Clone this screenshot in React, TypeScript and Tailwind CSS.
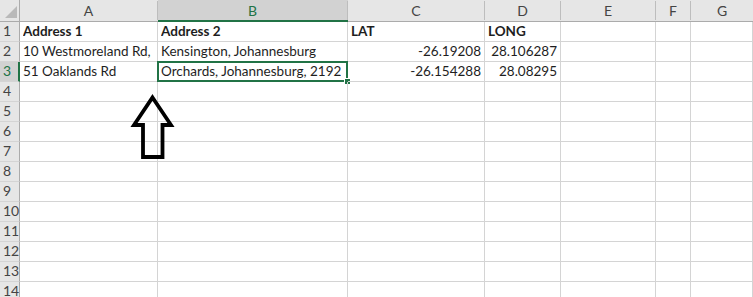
const COLS = ["A", "B", "C", "D", "E", "F", "G"];

type Cell = { v: string; bold?: boolean; num?: boolean };

const DATA: Record<number, Cell[]> = {
  1: [
    { v: "Address 1", bold: true },
    { v: "Address 2", bold: true },
    { v: "LAT", bold: true },
    { v: "LONG", bold: true },
  ],
  2: [
    { v: "10 Westmoreland Rd," },
    { v: "Kensington, Johannesburg" },
    { v: "-26.19208", num: true },
    { v: "28.106287", num: true },
  ],
  3: [
    { v: "51 Oaklands Rd" },
    { v: "Orchards, Johannesburg, 2192" },
    { v: "-26.154288", num: true },
    { v: "28.08295", num: true },
  ],
};

const ROWS = Array.from({ length: 14 }, (_, i) => i + 1);

const App = () => {
  return (
    <div
      className="relative w-[753px] h-[297px] overflow-hidden bg-white text-[#1e1e1e]"
      style={{ fontFamily: "Lato, 'Open Sans', sans-serif" }}
    >
      <div className="grid grid-cols-[20px_138px_190px_137px_76px_95px_35px_1fr] grid-rows-[22px] auto-rows-[20px]">
        {/* corner */}
        <div className="relative bg-[#e6e6e6] border-r border-b border-[#ababab]">
          <svg className="absolute left-[5px] top-[6px]" width="13" height="13" viewBox="0 0 13 13">
            <polygon points="12,0 12,12 0,12" fill="#b9b9b9" />
          </svg>
        </div>
        {COLS.map((c) => (
          <div
            key={c}
            className={`flex items-end justify-center text-[14px] ${
              c === "B"
                ? "bg-[#d2d2d2] text-[#217346] border-b-2 border-b-[#217346]"
                : "bg-[#e6e6e6] text-[#444] border-b border-[#ababab] pb-[1px]"
            }`}
          >
            <div className={`w-full text-center ${c === "G" ? "" : "border-r border-[#bdbdbd]"} h-[19px] leading-[19px]`}>
              {c}
            </div>
          </div>
        ))}

        {ROWS.map((r) => (
          <RowCells key={r} r={r} />
        ))}
      </div>

      {/* hand-drawn arrow over the sheet */}
      <svg className="absolute left-0 top-0 pointer-events-none" width="753" height="297">
        <polygon
          points="152.5,97.5 171,125 162.5,125 162.5,157 143,157 143,125 134,125"
          fill="none"
          stroke="#000"
          strokeWidth="3.8"
          strokeLinejoin="miter"
        />
      </svg>
    </div>
  );
};

const RowCells = ({ r }: { r: number }) => {
  const cells = DATA[r] || [];
  const selRow = r === 3;
  return (
    <>
      <div
        className={`flex items-end pl-[3px] pb-[1px] text-[14px] leading-[18px] border-b border-[#d4d4d4] ${
          selRow
            ? "bg-[#d2d2d2] text-[#217346] border-r-2 border-r-[#217346]"
            : "bg-[#e6e6e6] text-[#444] border-r border-r-[#ababab]"
        }`}
      >
        {r}
      </div>
      {COLS.map((c, i) => {
        const cell = cells[i];
        const selected = selRow && c === "B";
        return (
          <div
            key={c}
            className={`relative flex items-end pb-[1px] px-[3px] text-[13.5px] leading-[18px] whitespace-nowrap border-r border-b border-[#d4d4d4] ${
              cell?.num ? "justify-end" : "justify-start"
            } ${cell?.bold ? "font-bold" : ""}`}
          >
            <span className="overflow-hidden">{cell?.v}</span>
            {selected && (
              <>
                <div className="absolute -left-[1px] -top-[1px] -right-[1px] -bottom-[1px] border-2 border-[#217346]" />
                <div className="absolute -right-[4px] -bottom-[4px] w-[7px] h-[7px] bg-[#217346] border border-white" />
              </>
            )}
          </div>
        );
      })}
    </>
  );
};

export default App;
